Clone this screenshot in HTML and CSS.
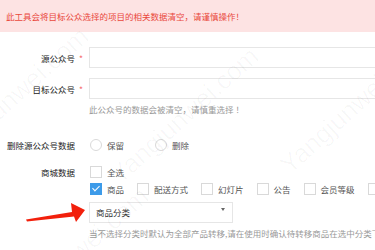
FILE: index.html
```html
<!DOCTYPE html>
<html lang="zh-CN">
<head>
    <meta charset="UTF-8">
    <meta name="viewport" content="width=device-width, initial-scale=1.0">
    <title>数据转移</title>
    <link rel="stylesheet" href="styles.css">
</head>
<body>
    <div class="alert">此工具会将目标公众选择的项目的相关数据清空，请谨慎操作！</div>

    <div class="form">
        <div class="row row-src">
            <label class="label">源公众号</label>
            <span class="mark">*</span>
            <div class="input"></div>
        </div>
        <div class="row row-target">
            <label class="label">目标公众号</label>
            <span class="mark">*</span>
            <div class="input"></div>
        </div>
        <div class="help help-target">此公众号的数据会被清空，请慎重选择 ！</div>

        <div class="row row-delete">
            <label class="label">删除源公众号数据</label>
            <span class="mark"></span>
            <div class="options">
                <span class="opt opt-radio"><i class="radio"></i>保留</span>
                <span class="opt opt-radio"><i class="radio"></i>删除</span>
            </div>
        </div>

        <div class="row row-mall">
            <label class="label">商城数据</label>
            <span class="mark"></span>
            <div class="mall">
                <div class="options line-all">
                    <span class="opt"><i class="check"></i>全选</span>
                </div>
                <div class="options line-items">
                    <span class="opt"><i class="check checked"></i>商品</span>
                    <span class="opt"><i class="check"></i>配送方式</span>
                    <span class="opt"><i class="check"></i>幻灯片</span>
                    <span class="opt"><i class="check"></i>公告</span>
                    <span class="opt"><i class="check"></i>会员等级</span>
                    <span class="opt"><i class="check"></i>优惠券</span>
                </div>
                <div class="select">商品分类<span class="caret"></span></div>
                <div class="help help-cat">当不选择分类时默认为全部产品转移,请在使用时确认待转移商品在选中分类下</div>
            </div>
        </div>
    </div>

    <!-- red arrow pointing at the category select -->
    <svg class="arrow" width="375" height="250" viewBox="0 0 375 250">
        <polygon points="26,219.5 72,212 71,203 85,210 76,222 74,216.5 27,221.5" fill="#f2200c"/>
    </svg>

    <div class="watermark">
        <span class="wm wm1">Yangjunwei.com</span>
        <span class="wm wm2">Yangjunwei.com</span>
        <span class="wm wm3">Yangjunwei.com</span>
        <span class="wm wm4">Yangjunwei.com</span>
    </div>
</body>
</html>
```

FILE: styles.css
```css
body {
    margin: 0;
    font-family: "Noto Sans CJK SC", "Noto Sans", sans-serif;
    font-size: 8.5px;
    color: #333;
    background: #fff;
    overflow: hidden;
    width: 375px;
    height: 250px;
    position: relative;
}
.alert {
    height: 32px;
    line-height: 32px;
    padding-left: 6px;
    background: #fde3e3;
    color: #e9483c;
    white-space: nowrap;
}
.form {
    padding-top: 15px;
}
.row {
    display: grid;
    grid-template-columns: 75px 14px 1fr;
    align-items: center;
}
.label {
    text-align: right;
    white-space: nowrap;
    color: #222;
}
.mark {
    color: #f56c6c;
    padding-left: 4px;
}
.input {
    height: 19px;
    border: 1px solid #e6e6e6;
    border-right: none;
}
.row-target {
    margin-top: 10px;
}
.help {
    color: #999;
    line-height: 12px;
    white-space: nowrap;
    overflow: hidden;
}
.help-target {
    margin: 4px 0 0 89px;
}
.row-delete {
    margin-top: 20px;
    height: 20px;
}
.options {
    display: flex;
    align-items: center;
    white-space: nowrap;
    overflow: hidden;
    color: #555;
}
.opt {
    display: flex;
    align-items: center;
    gap: 5px;
    margin-right: 12px;
}
.opt-radio {
    margin-right: 30px;
}
.radio {
    width: 10px;
    height: 10px;
    border: 1px solid #d9d9d9;
    border-radius: 50%;
    margin-left: 1px;
}
.row-mall {
    margin-top: 7px;
    align-items: start;
}
.row-mall .label {
    line-height: 20px;
}
.mall {
    min-width: 0;
}
.line-all {
    height: 20px;
}
.line-items {
    height: 14px;
}
.check {
    flex: none;
    width: 10px;
    height: 10px;
    border: 1px solid #d9d9d9;
    margin-left: 1px;
    position: relative;
}
.check.checked {
    background: #3d9be9;
    border-color: #3d9be9;
}
.check.checked::after {
    content: "";
    position: absolute;
    left: 3px;
    top: 0;
    width: 3px;
    height: 6px;
    border: solid #fff;
    border-width: 0 1.5px 1.5px 0;
    transform: rotate(45deg);
}
.select {
    position: relative;
    width: 136px;
    height: 19px;
    line-height: 19px;
    margin-top: 6px;
    padding-left: 6px;
    border: 1px solid #e6e6e6;
    color: #333;
}
.caret {
    position: absolute;
    right: 7px;
    top: 5px;
    border-left: 2px solid transparent;
    border-right: 2px solid transparent;
    border-top: 3px solid #666;
}
.help-cat {
    margin-top: 4px;
}
.arrow {
    position: absolute;
    left: 0;
    top: 0;
}
.watermark {
    position: absolute;
    left: 0;
    top: 0;
    width: 375px;
    height: 250px;
    overflow: hidden;
    pointer-events: none;
}
.wm {
    position: absolute;
    font-family: "Liberation Sans", Arial, sans-serif;
    font-size: 26px;
    color: rgba(0, 0, 0, 0.03);
    transform: rotate(-42deg);
    white-space: nowrap;
}
.wm1 { left: -80px; top: 80px; }
.wm2 { left: 90px; top: 100px; }
.wm3 { left: 260px; top: 90px; }
.wm4 { left: -20px; top: 240px; }
```
